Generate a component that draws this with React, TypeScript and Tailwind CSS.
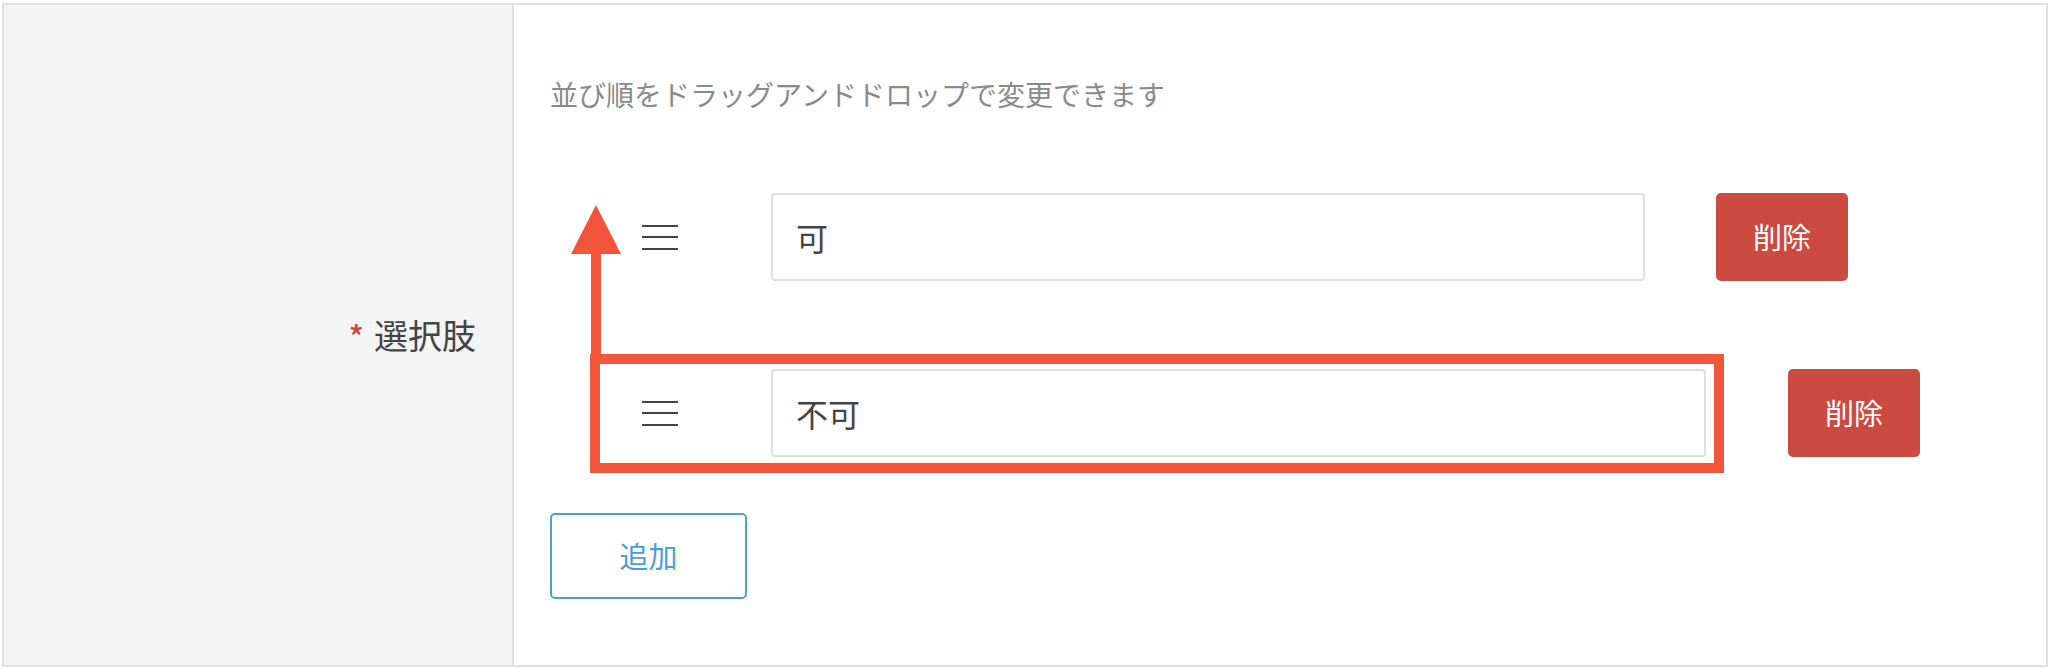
import React from "react";

function Handle() {
  return (
    <div className="flex flex-col gap-[9.5px] w-[36px]">
      <div className="h-[2px] bg-[#444]" />
      <div className="h-[2px] bg-[#444]" />
      <div className="h-[2px] bg-[#444]" />
    </div>
  );
}

function Row({ value, inputW, gap }: { value: string; inputW: string; gap: string }) {
  return (
    <div className="flex items-center h-[88px]">
      <div className="ml-[92px]">
        <Handle />
      </div>
      <div
        className={`ml-[93px] h-[88px] border-2 border-[#dedede] rounded-[4px] bg-white flex items-center pl-[23px] text-[32px] text-[#444] ${inputW}`}
      >
        {value}
      </div>
      <button
        className={`${gap} w-[132px] h-[88px] bg-[#cc4b41] rounded-[5px] text-white text-[29px] flex items-center justify-center`}
      >
        削除
      </button>
    </div>
  );
}

export default function App() {
  return (
    <div
      className="relative w-[2050px] h-[668px] bg-white pt-[3px] pl-[2px]"
      style={{ fontFamily: '"Noto Sans CJK JP", "Noto Sans", sans-serif' }}
    >
      <div className="flex w-[2046px] h-[664px] border-2 border-[#e0e0e0]">
        <div className="w-[510px] shrink-0 bg-[#f4f4f4] border-r-2 border-[#e0e0e0] flex items-center justify-end pr-[36px]">
          <span className="text-[#d0473c] text-[32px] font-medium mr-[10px] mt-[0px] leading-none">*</span>
          <span className="text-[34px] text-[#444] leading-none">選択肢</span>
        </div>
        <div className="flex-1 flex flex-col pl-[36px]">
          <div className="mt-[69px] h-[40px] leading-[40px] text-[28px] text-[#8a8a8a]">
            並び順をドラッグアンドドロップで変更できます
          </div>
          <div className="mt-[79px]">
            <Row value="可" inputW="w-[874px]" gap="ml-[71px]" />
          </div>
          <div className="mt-[88px]">
            <Row value="不可" inputW="w-[935px]" gap="ml-[82px]" />
          </div>
          <button className="mt-[56px] w-[197px] h-[86px] border-2 border-[#4b9fd3] rounded-[5px] bg-white text-[#4a9fd5] text-[29px] flex items-center justify-center">
            追加
          </button>
        </div>
      </div>

      {/* annotation overlay */}
      <div className="absolute left-[590px] top-[354px] w-[1134px] h-[119px] border-[10px] border-[#f3553a]" />
      <div className="absolute left-[591px] top-[250px] w-[10px] h-[106px] bg-[#f3553a]" />
      <svg className="absolute left-[571px] top-[205px]" width="50" height="49" viewBox="0 0 50 49">
        <polygon points="25,0 50,49 0,49" fill="#f3553a" />
      </svg>
    </div>
  );
}
